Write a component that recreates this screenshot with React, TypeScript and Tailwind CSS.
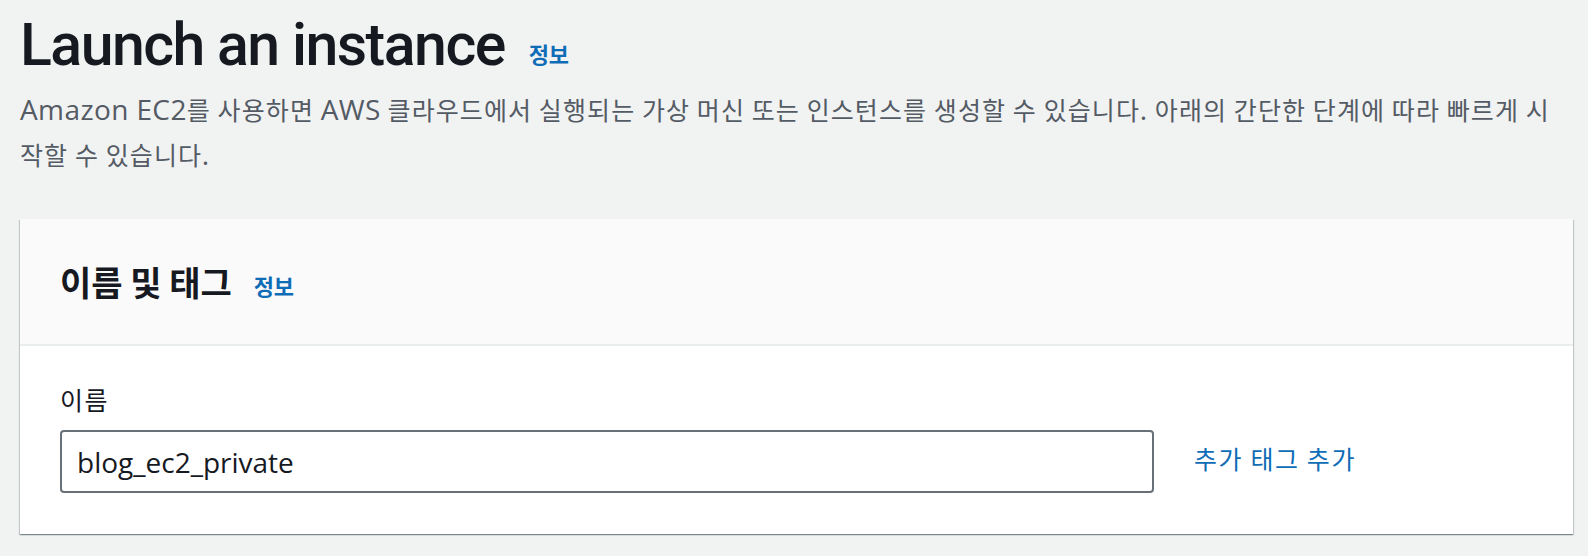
import React from 'react';

const kr = '"Noto Sans CJK KR", "Noto Sans", sans-serif';
const latin = '"Open Sans", "Noto Sans CJK KR", sans-serif';

function InfoLink({ className = '' }: { className?: string }) {
  return (
    <span className={`font-bold text-[22px] leading-[22px] tracking-[-0.3px] text-[#0f6cb6] ${className}`}>
      정보
    </span>
  );
}

// latin words in the description are set a little larger than the hangul, as in the console
function L({ children }: { children: React.ReactNode }) {
  return (
    <span className="text-[28px] tracking-[0.4px]" style={{ fontFamily: latin }}>
      {children}
    </span>
  );
}

export default function App() {
  return (
    <div
      className="w-full h-[556px] overflow-hidden bg-[#f1f2f2] pl-[20px] pr-[15px]"
      style={{ fontFamily: kr }}
    >
      {/* Page header */}
      <div className="flex items-start gap-[24px] pt-[9px]">
        <h1
          className="text-[59px] leading-[72px] font-medium text-[#16191f] tracking-[-1.5px]"
          style={{ fontFamily: 'Roboto, "Noto Sans", sans-serif' }}
        >
          Launch an instance
        </h1>
        <InfoLink className="mt-[33px]" />
      </div>
      <p className="mt-[6px] text-[25px] leading-[45px] tracking-[1.1px] text-[#545b64] whitespace-nowrap">
        <L>Amazon EC2</L>를 사용하면 <L>AWS</L> 클라우드에서 실행되는 가상 머신 또는 인스턴스를 생성할 수 있습니다. 아래의 간단한 단계에 따라 빠르게 시
        <br />
        작할 수 있습니다.
      </p>

      {/* Name and tags card */}
      <div className="mt-[42px] bg-white shadow-[0_1px_1px_0_rgba(0,28,36,0.3),1px_1px_1px_0_rgba(0,28,36,0.15),-1px_1px_1px_0_rgba(0,28,36,0.15)]">
        <div className="flex items-center gap-[22px] h-[127px] px-[40px] bg-[#fafafa] border-b-2 border-[#eaeded]">
          <h2 className="text-[34px] leading-[44px] font-bold text-[#16191f]">이름 및 태그</h2>
          <InfoLink className="mt-[6px]" />
        </div>
        <div className="pl-[40px] pt-[35px] pb-[41px]">
          <div className="text-[25px] leading-[36px] tracking-[1.5px] text-[#16191f] mb-[13px]">이름</div>
          <div className="flex items-center gap-[40px]">
            <div
              className="w-[1094px] h-[63px] flex items-center rounded-[4px] border-2 border-[#687078] bg-white px-[15px] text-[28px] text-[#16191f]"
              style={{ fontFamily: latin }}
            >
              blog_ec2_private
            </div>
            <span className="mb-[8px] text-[25px] leading-[36px] tracking-[1.6px] text-[#0f6cb6]">추가 태그 추가</span>
          </div>
        </div>
      </div>
    </div>
  );
}
